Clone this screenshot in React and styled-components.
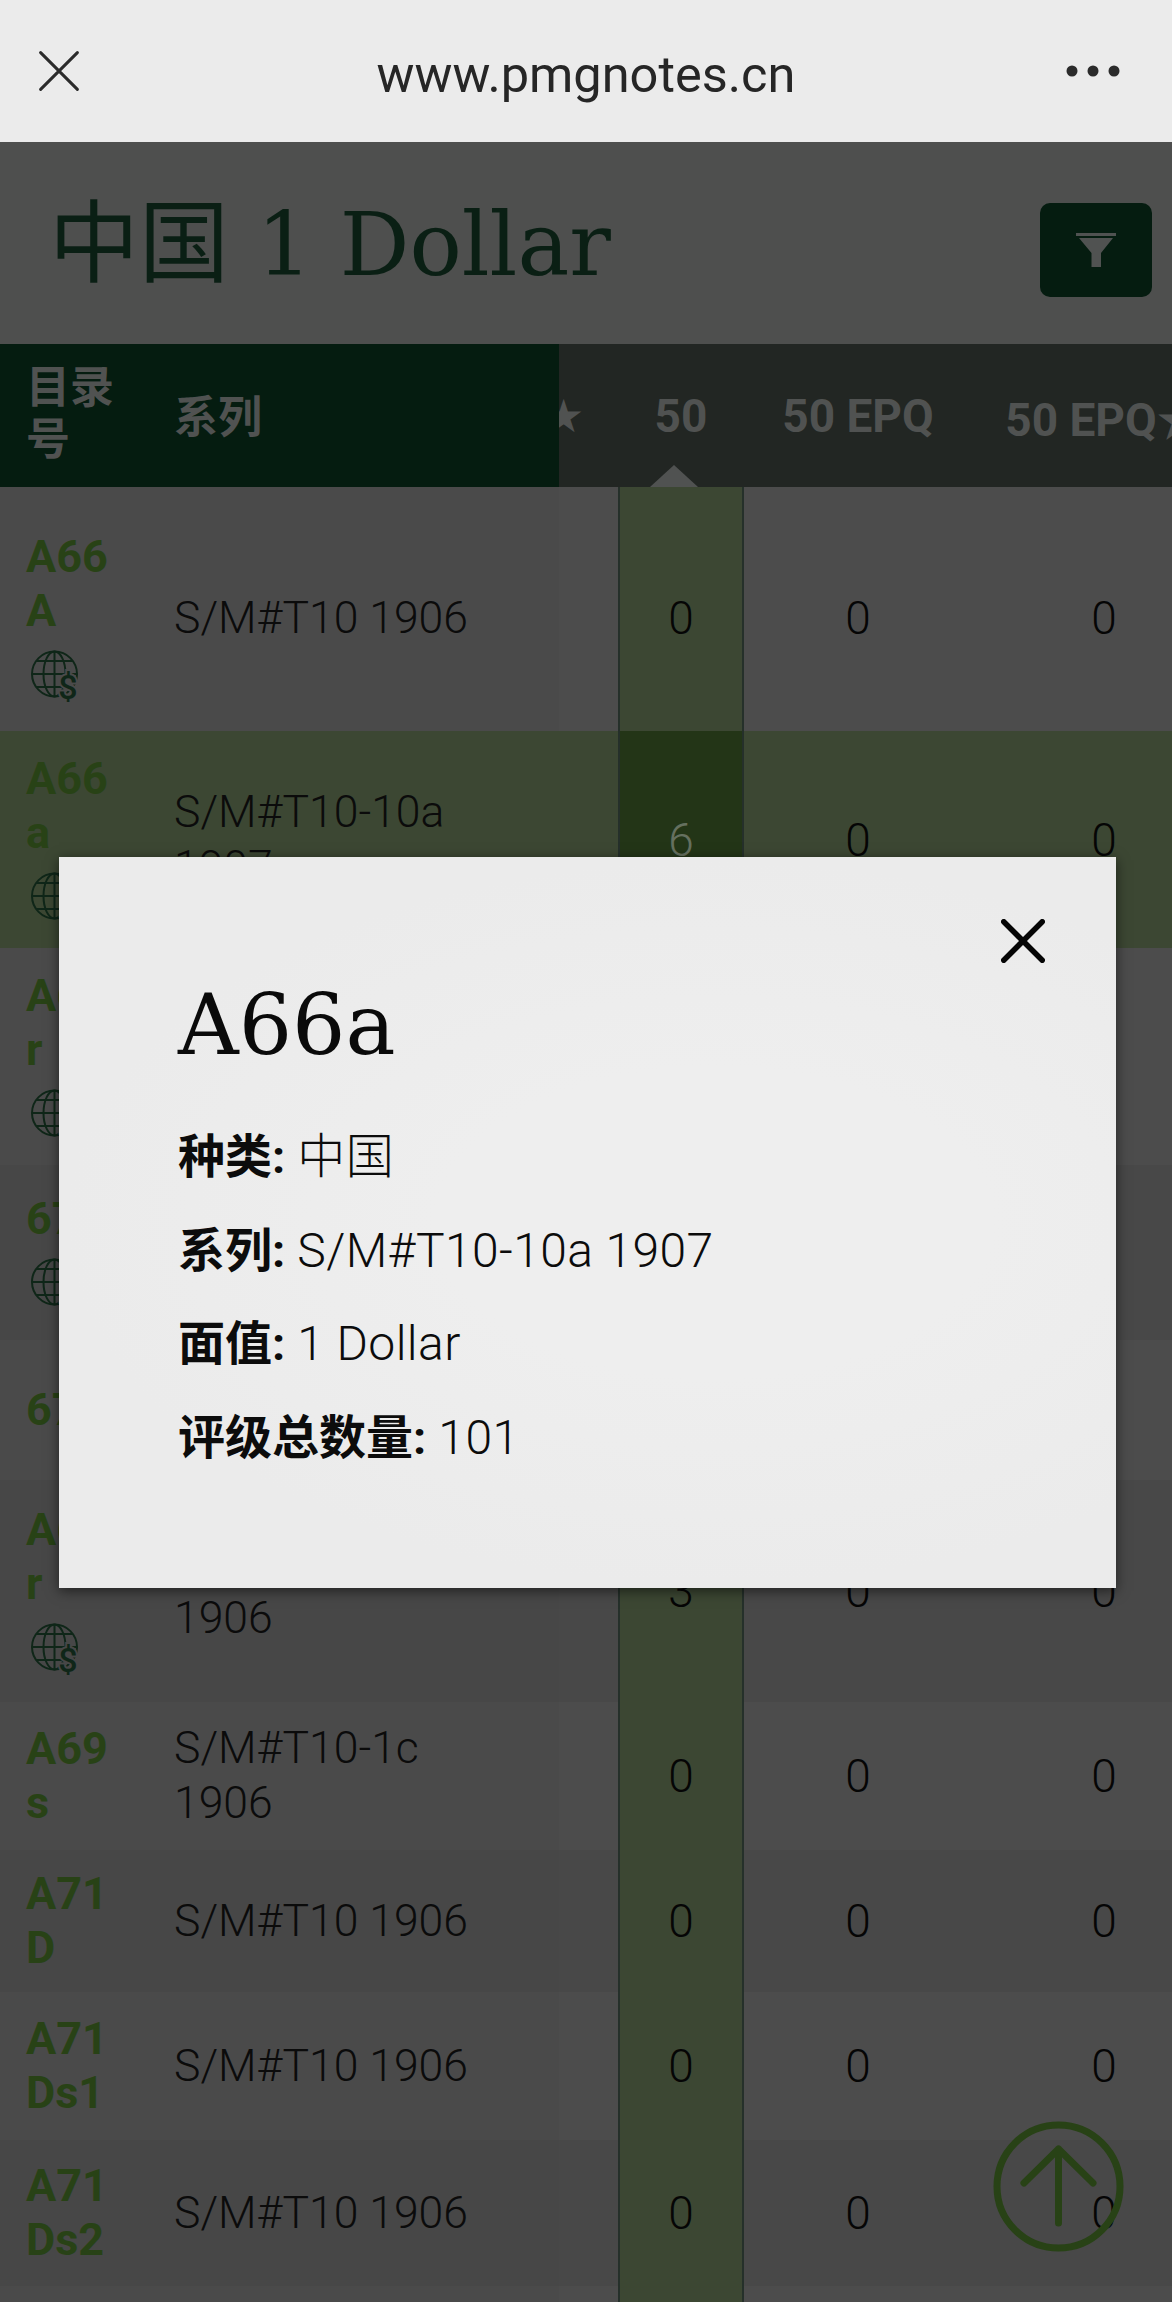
import React from 'react';
import styled, { createGlobalStyle } from 'styled-components';

const GlobalStyle = createGlobalStyle`
  html, body {
    margin: 0;
    padding: 0;
    background: #4e4f4e;
  }
  body {
    font-family: Roboto, "Noto Sans CJK SC", sans-serif;
  }
`;

const Screen = styled.div`
  position: relative;
  width: 1172px;
  height: 2302px;
  overflow: hidden;
  background: #4e4f4e;
`;

const TopBar = styled.header`
  height: 142px;
  background: #ebebeb;
  display: flex;
  align-items: center;
  justify-content: space-between;
  padding: 0 52px 0 38px;
  box-sizing: border-box;
`;

const UrlText = styled.div`
  font-family: Roboto, sans-serif;
  font-size: 50.500px;
  color: #262626;
  margin: 6px 0 0 26px;
`;

const TitleRow = styled.div`
  height: 202px;
  box-sizing: border-box;
  display: flex;
  align-items: center;
  justify-content: space-between;
  padding: 0 20px 0 49px;
`;

const Title = styled.h1`
  margin: -14px 0 0;
  font-family: "DejaVu Serif", "Noto Sans CJK SC", serif;
  font-size: 87px;
  font-weight: 400;
  color: #0a1f14;
`;

const TitleCjk = styled.span`
  font-size: 90px;
`;

const FilterButton = styled.button`
  width: 112px;
  height: 94px;
  margin-top: 13px;
  border: none;
  border-radius: 10px;
  background: #051c10;
  display: flex;
  align-items: center;
  justify-content: center;
  padding: 0;
`;

const Table = styled.div`
  width: 1236px;
`;

const columns = '174px 385px 59px 126px 228px 264px';

const HeaderRow = styled.div`
  display: grid;
  grid-template-columns: ${columns};
  height: 143px;
  background: #222623;
  color: #505251;
  font-weight: 700;
  font-size: 46px;
`;

const rowBg = (p) => (p.$active ? '#3c4733' : p.$alt ? '#484848' : '#4c4c4c');
const stickyBg = (p) => (p.$active ? 'transparent' : p.$alt ? '#474747' : '#4a4a4a');

const Row = styled.div`
  display: grid;
  grid-template-columns: ${columns};
  height: ${(p) => p.$height}px;
  background: ${rowBg};
`;

const HeadCell = styled.div`
  display: flex;
  align-items: center;
  justify-content: ${(p) => (p.$center ? 'center' : 'flex-start')};
  white-space: nowrap;
  position: relative;
  padding-left: ${(p) => p.$pad || 0}px;
`;

const StickyHead = styled(HeadCell)`
  background: #051c10;
  z-index: 2;
  font-size: 44px;
  padding-bottom: 4px;
  box-sizing: border-box;
`;

const SortArrow = styled.span`
  position: absolute;
  left: 32px;
  bottom: 0;
  width: 0;
  height: 0;
  border-left: 24px solid transparent;
  border-right: 24px solid transparent;
  border-bottom: 22px solid #505251;
`;

const HeadStar = styled.span`
  margin-left: -16px;
  font-size: 46px;
  font-family: "DejaVu Sans", sans-serif;
`;

const HeadWrap = styled.span`
  width: 92px;
  white-space: normal;
  line-height: 52px;
`;

const CatalogCell = styled.div`
  padding: ${(p) => p.$top || 0}px 0 0 26px;
  display: flex;
  flex-direction: column;
  justify-content: center;
  align-items: flex-start;
  color: #284216;
  font-weight: 700;
  font-size: 45px;
  line-height: 54px;
  background: ${stickyBg};
`;

const SeriesCell = styled.div`
  padding-top: ${(p) => p.$top || 0}px;
  display: flex;
  align-items: center;
  font-weight: 300;
  font-size: 44.500px;
  line-height: 55px;
  color: #0b0b0b;
  background: ${stickyBg};
`;

const SeriesText = styled.span`
  width: 320px;
`;

const EmptyCell = styled.div``;

const NumCell = styled.div`
  padding-top: ${(p) => p.$top || 0}px;
  display: flex;
  align-items: center;
  justify-content: center;
  font-weight: 300;
  font-size: 46px;
  color: ${(p) => (p.$muted ? '#65705f' : '#050505')};
`;

const HighlightCell = styled(NumCell)`
  background: ${(p) => (p.$active ? '#233517' : '#3c4733')};
  border-left: 2px solid #25302a;
  border-right: 2px solid #25302a;
  box-sizing: border-box;
`;

const Modal = styled.div`
  position: absolute;
  left: 59px;
  top: 857px;
  width: 1057px;
  height: 731px;
  box-sizing: border-box;
  padding: 118px 60px 0 119px;
  background: radial-gradient(ellipse at 62% 50%, #eeeeee 30%, #ebebeb 70%);
  box-shadow: 0 3px 12px rgba(0, 0, 0, 0.55);
`;

const CloseButton = styled.button`
  position: absolute;
  right: 66px;
  top: 58px;
  width: 54px;
  height: 54px;
  padding: 0;
  border: none;
  background: transparent;
`;

const ModalTitle = styled.h2`
  margin: 0 0 47px;
  font-family: "DejaVu Serif", serif;
  font-size: 84px;
  line-height: 100px;
  font-weight: 400;
  color: #0a0a0a;
`;

const InfoLine = styled.p`
  margin: 0 0 24.500px;
  font-size: 48px;
  letter-spacing: 0.4px;
  line-height: 69px;
  font-weight: 300;
  color: #0c0c0c;
`;

const InfoLabel = styled.strong`
  font-size: 47px;
  font-weight: 700;
  letter-spacing: 0;
`;

const BackToTop = styled.button`
  position: absolute;
  left: 993px;
  top: 2121px;
  width: 131px;
  height: 131px;
  padding: 0;
  border: none;
  background: transparent;
`;

const GlobeSvg = styled.svg`
  margin: 12px 0 0 5px;
`;

const CloseIcon = ({ size, weight, color }) => (
  <svg width={size} height={size} viewBox="0 0 48 48" fill="none" stroke={color} strokeWidth={weight} strokeLinecap="round">
    <path d="M3 3 L45 45 M45 3 L3 45" />
  </svg>
);

const FunnelIcon = () => (
  <svg width="40" height="34" viewBox="0 0 40 34" fill="#505251">
    <rect x="0" y="0" width="40" height="3" />
    <path d="M3 5 H37 L25 20 V34 H15.500 V20 Z" />
  </svg>
);

const GlobeIcon = ({ halo }) => (
  <GlobeSvg width="48" height="56" viewBox="0 0 48 56" fill="none" stroke="#0f2618" strokeWidth="2">
    <circle cx="23.500" cy="24" r="22.500" />
    <ellipse cx="23.500" cy="24" rx="11" ry="22.500" />
    <path d="M23.500 1.500 V46.500 M1 24 H46 M5 11 H42 M5 37 H42" />
    <text
      x="37"
      y="49"
      textAnchor="middle"
      fontFamily="Roboto, sans-serif"
      fontWeight="500"
      fontSize="34"
      fill="#0f2618"
      stroke={halo}
      strokeWidth="4"
      paintOrder="stroke"
    >
      $
    </text>
  </GlobeSvg>
);

const rows = [
  { id: ['A66', 'A'], globe: true, series: 'S/M#T10 1906', v: [0, 0, 0], h: 244, top: 18 },
  { id: ['A66', 'a'], globe: true, series: 'S/M#T10-10a 1907', v: [6, 0, 0], h: 217, active: true },
  { id: ['A67', 'r'], globe: true, series: 'S/M#T10 1906', v: [0, 0, 0], h: 217 },
  { id: ['67'], globe: true, series: 'S/M#T10 1906', v: [0, 0, 0], h: 175, alt: true },
  { id: ['67'], series: 'S/M#T10 1906', v: [0, 0, 0], h: 140 },
  { id: ['A68', 'r'], globe: true, series: 'S/M#T10-1b 1906', v: [3, 0, 0], h: 222, alt: true },
  { id: ['A69', 's'], series: 'S/M#T10-1c 1906', v: [0, 0, 0], h: 148 },
  { id: ['A71', 'D'], series: 'S/M#T10 1906', v: [0, 0, 0], h: 142, alt: true },
  { id: ['A71', 'Ds1'], series: 'S/M#T10 1906', v: [0, 0, 0], h: 148 },
  { id: ['A71', 'Ds2'], series: 'S/M#T10 1906', v: [0, 0, 0], h: 146, alt: true },
  { id: [], series: '', v: ['', '', ''], h: 16 },
];

const info = [
  ['种类:', '中国'],
  ['系列:', 'S/M#T10-10a 1907'],
  ['面值:', '1 Dollar'],
  ['评级总数量:', '101'],
];

const App = () => (
  <Screen>
    <GlobalStyle />
    <TopBar>
      <CloseIcon size={42} weight={3.5} color="#2b2b2b" />
      <UrlText>www.pmgnotes.cn</UrlText>
      <svg width="54" height="12" viewBox="0 0 54 12" fill="#2b2b2b">
        <circle cx="6" cy="6" r="5.5" />
        <circle cx="27" cy="6" r="5.5" />
        <circle cx="48" cy="6" r="5.5" />
      </svg>
    </TopBar>

    <TitleRow>
      <Title>
        <TitleCjk>中国</TitleCjk> 1 Dollar
      </Title>
      <FilterButton>
        <FunnelIcon />
      </FilterButton>
    </TitleRow>

    <Table>
      <HeaderRow>
        <StickyHead $pad={26}>
          <HeadWrap>目录号</HeadWrap>
        </StickyHead>
        <StickyHead>系列</StickyHead>
        <HeadCell>
          <HeadStar>★</HeadStar>
        </HeadCell>
        <HeadCell $center>
          50
          <SortArrow />
        </HeadCell>
        <HeadCell $center>50 EPQ</HeadCell>
        <HeadCell $center>50 EPQ★</HeadCell>
      </HeaderRow>

      {rows.map((row, i) => (
        <Row key={i} $height={row.h} $active={row.active} $alt={row.alt}>
          <CatalogCell $active={row.active} $alt={row.alt} $top={row.top}>
            {row.id.map((line) => (
              <span key={line}>{line}</span>
            ))}
            {row.globe && <GlobeIcon halo={row.active ? '#3c4733' : row.alt ? '#474747' : '#4a4a4a'} />}
          </CatalogCell>
          <SeriesCell $active={row.active} $alt={row.alt} $top={row.top}>
            <SeriesText>{row.series}</SeriesText>
          </SeriesCell>
          <EmptyCell />
          <HighlightCell $active={row.active} $muted={row.active} $top={row.top}>
            {row.v[0]}
          </HighlightCell>
          <NumCell $top={row.top}>{row.v[1]}</NumCell>
          <NumCell $top={row.top}>{row.v[2]}</NumCell>
        </Row>
      ))}
    </Table>

    <Modal>
      <CloseButton>
        <CloseIcon size={44} weight={6} color="#050505" />
      </CloseButton>
      <ModalTitle>A66a</ModalTitle>
      {info.map(([label, value]) => (
        <InfoLine key={label}>
          <InfoLabel>{label}</InfoLabel> {value}
        </InfoLine>
      ))}
    </Modal>

    <BackToTop>
      <svg width="131" height="131" viewBox="0 0 131 131" fill="none" stroke="#284216" strokeWidth="7" strokeLinecap="round" strokeLinejoin="round">
        <circle cx="65.5" cy="65.5" r="61.5" />
        <path d="M65.5 102 V28 M31 62 L65.5 28 L100 62" />
      </svg>
    </BackToTop>
  </Screen>
);

export default App;
